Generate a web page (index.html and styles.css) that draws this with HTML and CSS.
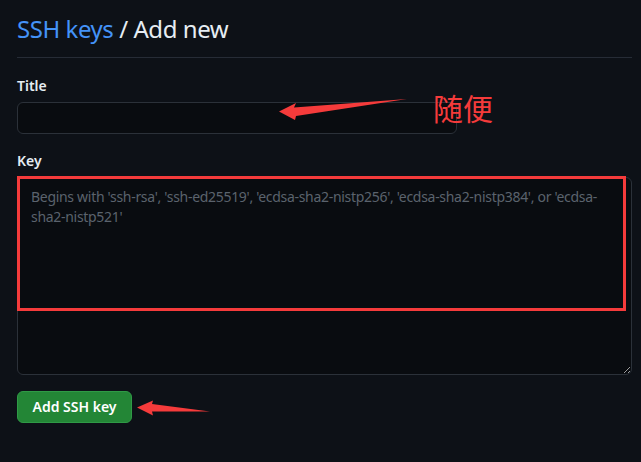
FILE: index.html
```html
<!DOCTYPE html>
<html lang="en">
<head>
<meta charset="utf-8">
<title>SSH keys / Add new</title>
<link rel="stylesheet" href="styles.css">
</head>
<body>
<main class="page">
  <div class="subhead">
    <h1 class="subhead-title"><a class="crumb" href="#">SSH keys</a> / Add new</h1>
  </div>
  <form class="form">
    <div class="form-group">
      <label class="form-label" for="title">Title</label>
      <input class="form-input title-input" id="title" type="text">
    </div>
    <div class="form-group">
      <label class="form-label" for="key">Key</label>
      <textarea class="form-input key-input" id="key" placeholder="Begins with 'ssh-rsa', 'ssh-ed25519', 'ecdsa-sha2-nistp256', 'ecdsa-sha2-nistp384', or 'ecdsa-sha2-nistp521'"></textarea>
    </div>
    <button class="btn-primary" type="button">Add SSH key</button>
  </form>
</main>

<div class="annot-box"></div>
<div class="annot-text">随便</div>
<svg class="annot-arrows" width="641" height="462" viewBox="0 0 641 462">
  <polygon fill="#f53b3b" points="279,111.5 296,103 294,107.5 407,99 296,116 295,120"/>
  <polygon fill="#f53b3b" points="137,407.5 153,400.5 152,404 210,411.5 152,411.5 153,415.5"/>
</svg>
</body>
</html>
```
FILE: styles.css
```css
html, body {
  margin: 0;
  padding: 0;
  background: #0d1117;
}
body {
  font-family: "Noto Sans", "Liberation Sans", sans-serif;
  color: #e6edf3;
  width: 641px;
  height: 462px;
  overflow: hidden;
  position: relative;
}
.page {
  padding: 0 9px 0 17px;
}
.subhead {
  padding-top: 14px;
  padding-bottom: 13px;
  border-bottom: 1px solid #262c36;
}
.subhead-title {
  margin: 0;
  font-size: 24px;
  font-weight: 400;
  line-height: 30px;
  letter-spacing: -0.45px;
  color: #e6edf3;
}
.crumb {
  color: #4493f8;
  text-decoration: none;
}
.form {
  padding-top: 18px;
}
.form-group {
  display: flex;
  flex-direction: column;
  margin-bottom: 17px;
}
.form-label {
  font-size: 14px;
  font-weight: 600;
  line-height: 20px;
  margin-bottom: 6px;
  color: #e6edf3;
}
.form-input {
  box-sizing: border-box;
  background: #090c10;
  border: 1px solid #2b3139;
  border-radius: 6px;
  color: #e6edf3;
  font-family: "Noto Sans", "Liberation Sans", sans-serif;
  font-size: 14px;
  line-height: 20px;
  outline: none;
}
.title-input {
  width: 440px;
  height: 32px;
  padding: 5px 12px;
}
.key-input {
  width: 615px;
  height: 198px;
  padding: 9px 13px;
  resize: vertical;
  display: block;
  letter-spacing: -0.3px;
}
.key-input::placeholder {
  color: #5b636d;
}
.btn-primary {
  display: block;
  box-sizing: border-box;
  width: 115px;
  height: 32px;
  margin-top: -1px;
  background: #238636;
  border: 1px solid #2f9a46;
  border-radius: 6px;
  color: #ffffff;
  font-family: "Noto Sans", "Liberation Sans", sans-serif;
  font-size: 14px;
  font-weight: 600;
  line-height: 20px;
  padding: 0;
}
.annot-box {
  position: absolute;
  left: 17px;
  top: 176px;
  width: 603px;
  height: 129px;
  border: 3.5px solid #f53b3b;
}
.annot-text {
  position: absolute;
  left: 433px;
  top: 90px;
  font-family: "Noto Sans CJK SC", sans-serif;
  font-size: 30px;
  line-height: 34px;
  color: #f53b3b;
}
.annot-arrows {
  position: absolute;
  left: 0;
  top: 0;
  pointer-events: none;
}
```
